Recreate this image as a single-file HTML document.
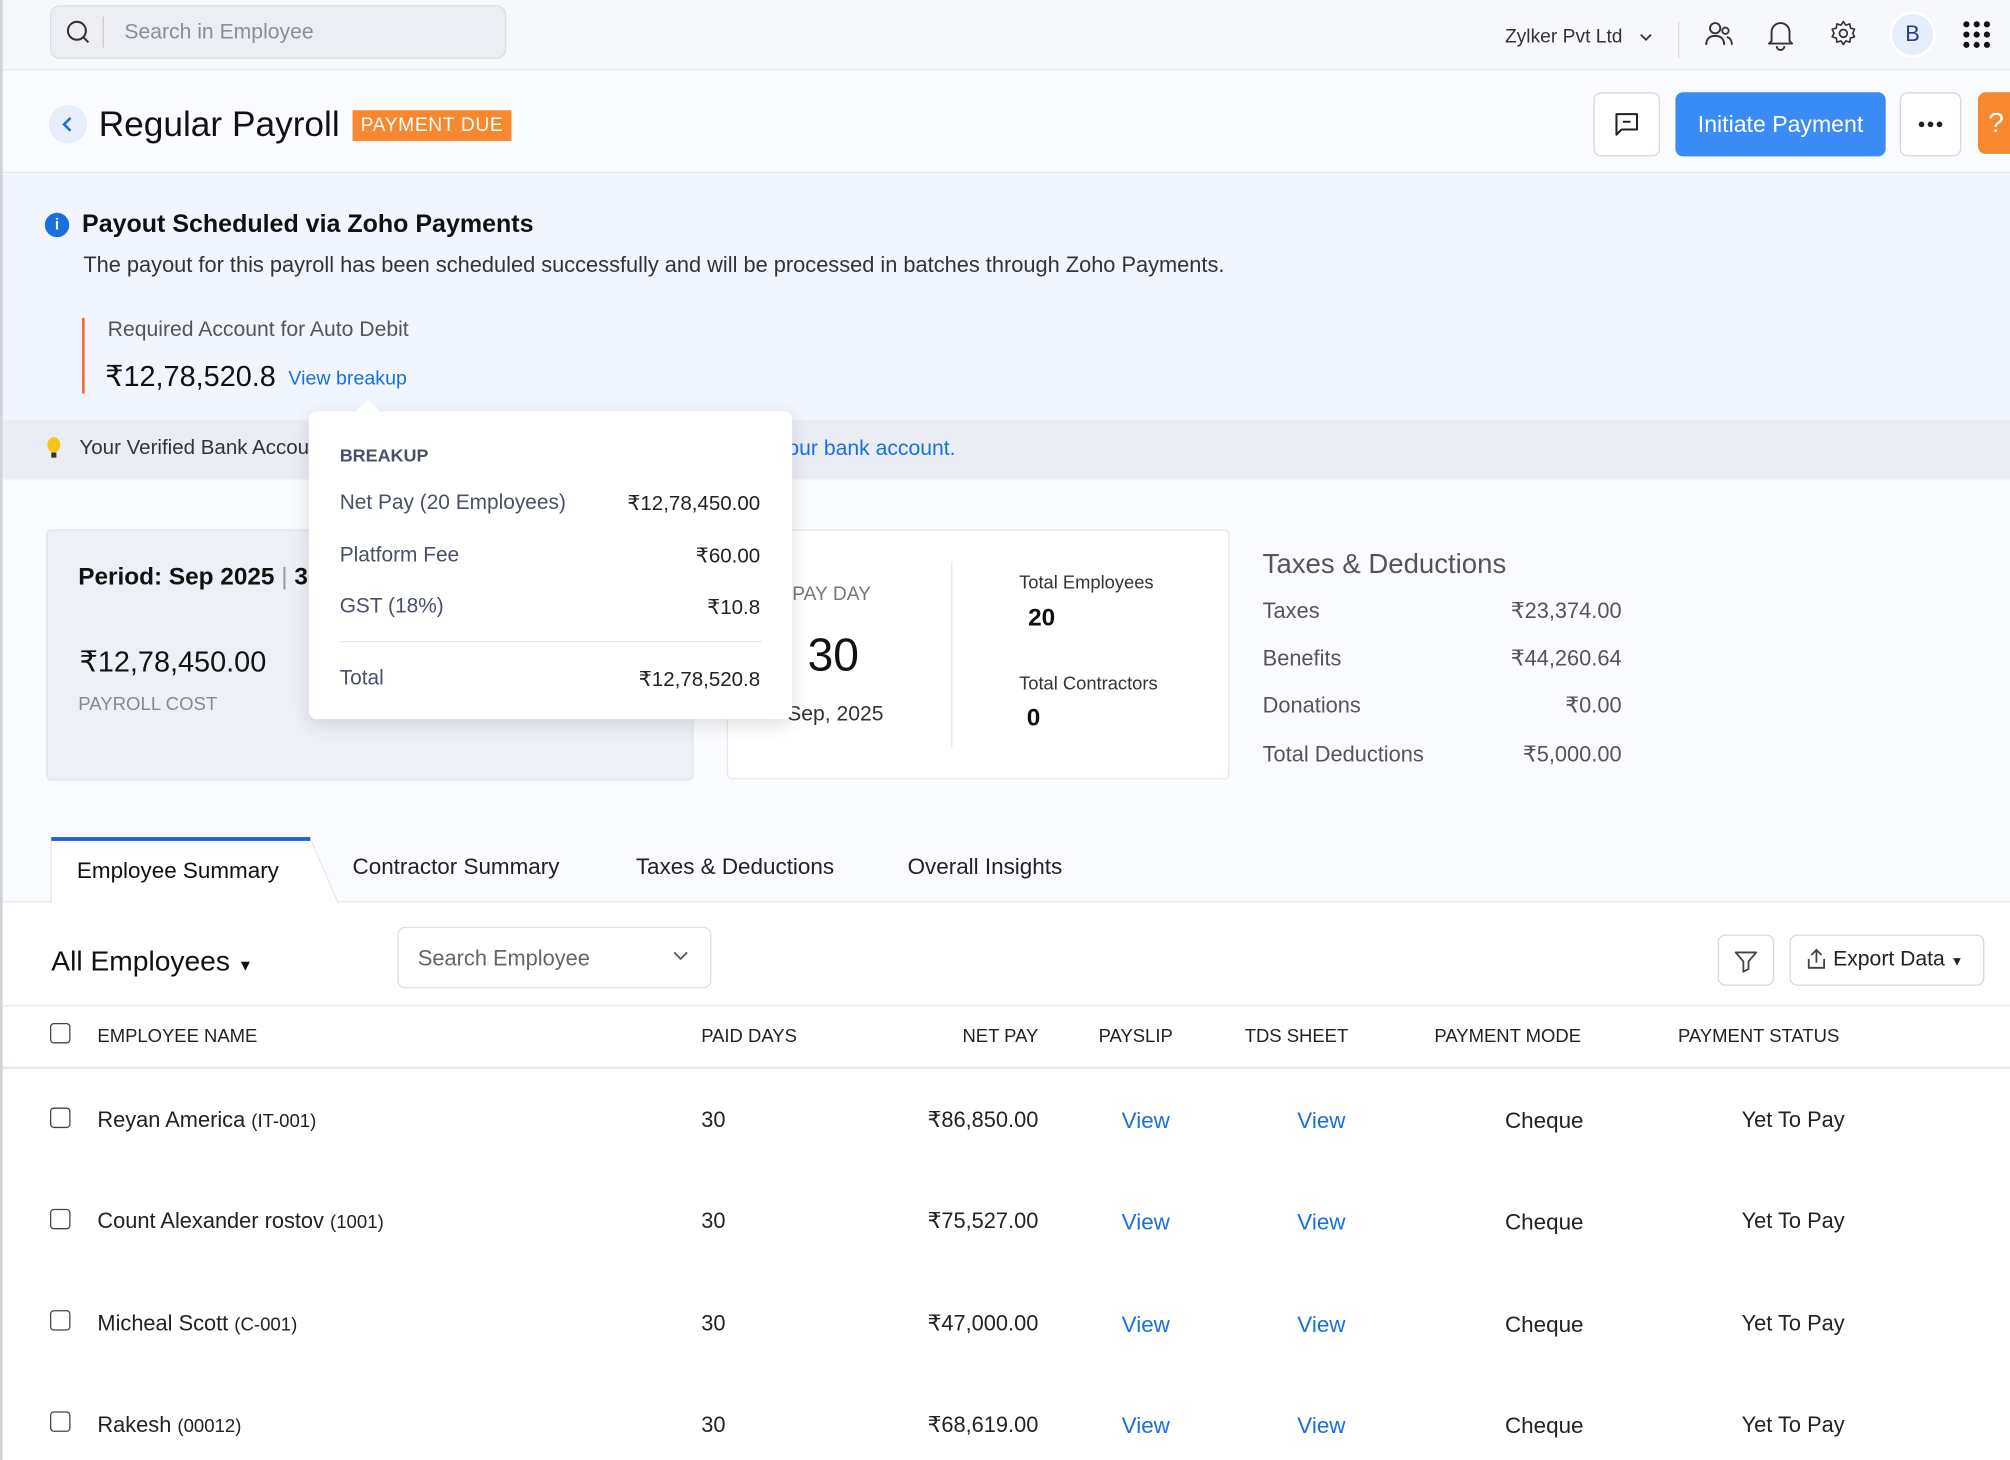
<!DOCTYPE html>
<html><head><meta charset="utf-8"><style>
*{box-sizing:border-box;margin:0;padding:0}
html,body{width:2010px;height:1460px;overflow:hidden;background:#fafbfe}
#w{position:absolute;left:0;top:0;width:1568px;height:1139px;transform:scale(1.28189);transform-origin:0 0;font-family:"Liberation Sans",sans-serif;color:#222;background:#fafbfe}
.a{position:absolute;white-space:nowrap}
.r{text-align:right}
.blue{color:#1a6fe0}
.g{color:#555}
svg{position:absolute}
.cb{position:absolute;width:16px;height:16px;border:1.5px solid #444;border-radius:3px;background:#fff}
.btn{position:absolute;border:1.5px solid #d6d8de;border-radius:6px;background:#fff}
.th{font-size:14.4px;color:#222;top:801px}
</style></head><body><div id="w">
<div class="a" style="left:0;top:0;width:2px;height:1139px;background:#cfd2da;z-index:5"></div>
<div class="a" style="left:0;top:0;width:1568px;height:55px;background:#f7f8fc;border-bottom:1px solid #e6e8ee"></div>
<div class="a" style="left:39px;top:4px;width:356px;height:42px;background:#eceef4;border:1px solid #dcdfe6;border-radius:8px"></div>
<svg style="left:51px;top:15px" width="20" height="20" viewBox="0 0 20 20"><circle cx="9" cy="9" r="7" fill="none" stroke="#333" stroke-width="1.6"/><path d="M14 14l4 4" stroke="#333" stroke-width="1.6"/></svg>
<div class="a" style="left:80px;top:13px;width:1px;height:24px;background:#ccc"></div>
<div class="a" style="left:97px;top:16px;font-size:16.5px;color:#8a8e99">Search in Employee</div>
<div class="a" style="left:1174px;top:20px;font-size:15px;color:#333">Zylker Pvt Ltd</div>
<svg style="left:1278px;top:24px" width="12" height="10" viewBox="0 0 12 10"><path d="M2 3l4 4 4-4" fill="none" stroke="#333" stroke-width="1.4"/></svg>
<div class="a" style="left:1309px;top:17px;width:1px;height:28px;background:#ddd"></div>
<svg style="left:1329px;top:16px" width="24" height="22" viewBox="0 0 24 22"><circle cx="9" cy="6" r="4" fill="none" stroke="#333" stroke-width="1.5"/><path d="M2 19c0-5 3-7 7-7s7 2 7 7" fill="none" stroke="#333" stroke-width="1.5"/><circle cx="17" cy="8" r="2.5" fill="none" stroke="#333" stroke-width="1.4"/><path d="M18 13c2 0 4 2 4 6" fill="none" stroke="#333" stroke-width="1.4"/></svg>
<svg style="left:1378px;top:14px" width="22" height="26" viewBox="0 0 22 26"><path d="M4 18V11a7 7 0 0114 0v7l2 2H2z" fill="none" stroke="#333" stroke-width="1.5" stroke-linejoin="round"/><path d="M8 22a3 3 0 006 0" fill="none" stroke="#333" stroke-width="1.5"/></svg>
<svg style="left:1427px;top:15px" width="22" height="22" viewBox="0 0 24 24"><circle cx="12" cy="12" r="3.3" fill="none" stroke="#333" stroke-width="1.5"/><path d="M12 2l2 3 3.5-1 .5 3.5 3.5 1-1.5 3.5 1.5 3-3.5 1-.5 3.5-3.5-1-2 3-2-3-3.5 1-.5-3.5-3.5-1 1.5-3-1.5-3.5 3.5-1L6.5 4 10 5z" fill="none" stroke="#333" stroke-width="1.4" stroke-linejoin="round"/></svg>
<div class="a" style="left:1474px;top:9px;width:36px;height:36px;border-radius:50%;background:#e6eefb;border:2px solid #fff;font-size:17px;color:#1d3f8a;text-align:center;line-height:32px">B</div>
<svg style="left:1531px;top:16px" width="22" height="22" viewBox="0 0 22 22" fill="#111"><circle cx="3" cy="3" r="2.4"/><circle cx="11" cy="3" r="2.4"/><circle cx="19" cy="3" r="2.4"/><circle cx="3" cy="11" r="2.4"/><circle cx="11" cy="11" r="2.4"/><circle cx="19" cy="11" r="2.4"/><circle cx="3" cy="19" r="2.4"/><circle cx="11" cy="19" r="2.4"/><circle cx="19" cy="19" r="2.4"/></svg>
<div class="a" style="left:0;top:56px;width:1568px;height:79px;background:#fafbfe;border-bottom:1px solid #e6e8ee"></div>
<div class="a" style="left:38px;top:82px;width:30px;height:30px;border-radius:50%;background:#e8effb"></div>
<svg style="left:46px;top:89px" width="14" height="16" viewBox="0 0 14 16"><path d="M9 3L4 8l5 5" fill="none" stroke="#1a6fe0" stroke-width="2"/></svg>
<div class="a" style="left:77px;top:81px;font-size:27.5px;color:#111">Regular Payroll</div>
<div class="a" style="left:275px;top:86px;width:124px;height:24px;background:#f7882f;color:#fff;font-size:15px;line-height:24px;text-align:center;letter-spacing:.5px">PAYMENT DUE</div>
<div class="btn" style="left:1243px;top:72px;width:52px;height:50px"></div>
<svg style="left:1258px;top:87px" width="22" height="20" viewBox="0 0 22 20"><path d="M3 2h16v12H7l-4 4z" fill="none" stroke="#222" stroke-width="1.6" stroke-linejoin="round"/><path d="M8 8h6" stroke="#222" stroke-width="1.6"/></svg>
<div class="a" style="left:1307px;top:72px;width:164px;height:50px;background:#3b8bf7;border-radius:6px;color:#fff;font-size:18px;line-height:50px;text-align:center">Initiate Payment</div>
<div class="btn" style="left:1482px;top:72px;width:48px;height:50px"></div>
<svg style="left:1496px;top:94px" width="20" height="6" viewBox="0 0 20 6" fill="#222"><circle cx="3" cy="3" r="2.2"/><circle cx="10" cy="3" r="2.2"/><circle cx="17" cy="3" r="2.2"/></svg>
<div class="a" style="left:1543px;top:72px;width:40px;height:48px;background:#f7882f;border-radius:6px;color:#fff;font-size:22px;line-height:48px;padding-left:8px">?</div>
<div class="a" style="left:0;top:136px;width:1568px;height:192px;background:#f1f5fd"></div>
<div class="a" style="left:35px;top:166px;width:19px;height:19px;border-radius:50%;background:#1a6fe0;color:#fff;font-size:12px;font-weight:bold;text-align:center;line-height:19px">i</div>
<div class="a" style="left:64px;top:164px;font-size:19.5px;font-weight:bold;color:#111">Payout Scheduled via Zoho Payments</div>
<div class="a" style="left:65px;top:197px;font-size:17px;color:#333">The payout for this payroll has been scheduled successfully and will be processed in batches through Zoho Payments.</div>
<div class="a" style="left:64px;top:248px;width:2px;height:59px;background:#f26b2a"></div>
<div class="a" style="left:84px;top:248px;font-size:16.5px;color:#555">Required Account for Auto Debit</div>
<div class="a" style="left:82px;top:281px;font-size:22.5px;color:#111">₹12,78,520.8</div>
<div class="a blue" style="left:225px;top:287px;font-size:15.3px">View breakup</div>
<div class="a" style="left:0;top:328px;width:1568px;height:46px;background:#ebedf5"></div>
<svg style="left:36px;top:341px" width="12" height="18" viewBox="0 0 12 18"><ellipse cx="6" cy="6" rx="5" ry="6" fill="#f5c518"/><rect x="4" y="12" width="4" height="4" fill="#333"/></svg>
<div class="a" style="left:62px;top:341px;font-size:16px;color:#333">Your Verified Bank Account will be debited automatically, please link </div>
<div class="a blue" style="left:602px;top:341px;font-size:16.5px;background:#ebedf5;padding-left:4px">your bank account.</div>
<div class="a" style="left:36px;top:413px;width:505px;height:196px;background:#eef0f7;border:1px solid #e1e4ec;border-radius:4px"></div>
<div class="a" style="left:61px;top:440px;font-size:19px;font-weight:bold;color:#111">Period: Sep 2025 <span style="font-weight:normal;color:#999">|</span> 30 Base Days</div>
<div class="a" style="left:62px;top:504px;font-size:22.5px;color:#111">₹12,78,450.00</div>
<div class="a" style="left:61px;top:542px;font-size:14.5px;color:#888">PAYROLL COST</div>
<div class="a" style="left:567px;top:413px;width:392px;height:195px;background:#fff;border:1px solid #e6e8ee;border-radius:4px"></div>
<div class="a" style="left:618px;top:455px;font-size:15px;color:#777">PAY DAY</div>
<div class="a" style="left:630px;top:490px;font-size:36px;color:#111">30</div>
<div class="a" style="left:614px;top:548px;font-size:16.5px;color:#333">Sep, 2025</div>
<div class="a" style="left:742px;top:438px;width:1px;height:145px;background:#e4e6ec"></div>
<div class="a" style="left:795px;top:447px;font-size:14.3px;color:#333">Total Employees</div>
<div class="a" style="left:802px;top:472px;font-size:19px;font-weight:bold;color:#111">20</div>
<div class="a" style="left:795px;top:526px;font-size:14.3px;color:#333">Total Contractors</div>
<div class="a" style="left:801px;top:550px;font-size:19px;font-weight:bold;color:#111">0</div>
<div class="a" style="left:985px;top:428px;font-size:21.5px;color:#555">Taxes &amp; Deductions</div>
<div class="a g" style="left:985px;top:467px;font-size:17px">Taxes</div><div class="a g r" style="left:1100px;width:165px;top:467px;font-size:17px">₹23,374.00</div>
<div class="a g" style="left:985px;top:504px;font-size:17px">Benefits</div><div class="a g r" style="left:1100px;width:165px;top:504px;font-size:17px">₹44,260.64</div>
<div class="a g" style="left:985px;top:541px;font-size:17px">Donations</div><div class="a g r" style="left:1100px;width:165px;top:541px;font-size:17px">₹0.00</div>
<div class="a g" style="left:985px;top:579px;font-size:17px">Total Deductions</div><div class="a g r" style="left:1100px;width:165px;top:579px;font-size:17px">₹5,000.00</div>
<div class="a" style="left:241px;top:321px;width:377px;height:240px;background:#fff;border-radius:6px;box-shadow:0 4px 14px rgba(0,0,0,.13);z-index:3">
<div class="a" style="left:40px;top:-7px;width:12px;height:12px;background:#fff;transform:rotate(45deg)"></div>
<div class="a" style="left:24px;top:26px;font-size:14px;font-weight:bold;color:#4a5068">BREAKUP</div>
<div class="a" style="left:24px;top:62px;font-size:16.3px;color:#4a5068">Net Pay (20 Employees)</div><div class="a r" style="left:150px;width:202px;top:62px;font-size:16px;color:#222">₹12,78,450.00</div>
<div class="a" style="left:24px;top:103px;font-size:16.3px;color:#4a5068">Platform Fee</div><div class="a r" style="left:150px;width:202px;top:103px;font-size:16px;color:#222">₹60.00</div>
<div class="a" style="left:24px;top:143px;font-size:16.3px;color:#4a5068">GST (18%)</div><div class="a r" style="left:150px;width:202px;top:143px;font-size:16px;color:#222">₹10.8</div>
<div class="a" style="left:24px;top:179px;width:329px;height:1px;background:#e3e6ee"></div>
<div class="a" style="left:24px;top:199px;font-size:16.3px;color:#4a5068">Total</div><div class="a r" style="left:150px;width:202px;top:199px;font-size:16px;color:#222">₹12,78,520.8</div>
</div>
<div class="a" style="left:0;top:703px;width:1568px;height:436px;background:#fff;border-top:1px solid #e6e8ee"></div>
<svg style="left:38px;top:652px" width="230" height="53" viewBox="0 0 230 53"><path d="M2 52V2h202l22 51" fill="#fff" stroke="#e6e8ee"/><rect x="2" y="1" width="202" height="3" fill="#1f5fd6"/></svg>
<div class="a" style="left:60px;top:669px;font-size:17.5px;color:#111">Employee Summary</div>
<div class="a" style="left:275px;top:666px;font-size:17.5px;color:#222">Contractor Summary</div>
<div class="a" style="left:496px;top:666px;font-size:17.5px;color:#222">Taxes &amp; Deductions</div>
<div class="a" style="left:708px;top:666px;font-size:17.5px;color:#222">Overall Insights</div>
<div class="a" style="left:40px;top:737px;font-size:22px;color:#111">All Employees <span style="font-size:12px">▼</span></div>
<div class="btn" style="left:310px;top:723px;width:245px;height:48px;border-color:#dfe1e6"></div>
<div class="a" style="left:326px;top:738px;font-size:17px;color:#666">Search Employee</div>
<svg style="left:524px;top:741px" width="14" height="10" viewBox="0 0 14 10"><path d="M2 2l5 5 5-5" fill="none" stroke="#555" stroke-width="1.4"/></svg>
<div class="btn" style="left:1340px;top:729px;width:44px;height:40px"></div>
<svg style="left:1352px;top:740px" width="20" height="20" viewBox="0 0 20 20"><path d="M2 3h16l-6 7v6l-4 2v-8z" fill="none" stroke="#444" stroke-width="1.4" stroke-linejoin="round"/></svg>
<div class="btn" style="left:1396px;top:729px;width:152px;height:40px"></div>
<svg style="left:1408px;top:739px" width="18" height="18" viewBox="0 0 18 18"><path d="M9 12V2M5 6l4-4 4 4M3 9v7h12V9" fill="none" stroke="#444" stroke-width="1.4"/></svg>
<div class="a" style="left:1430px;top:739px;font-size:16.5px;color:#222">Export Data <span style="font-size:10px">▼</span></div>
<div class="a" style="left:0;top:784px;width:1568px;height:50px;border-top:1px solid #e6e8ee;border-bottom:2px solid #e6e8ee"></div>
<div class="cb" style="left:39px;top:798px"></div>
<div class="a th" style="left:76px">EMPLOYEE NAME</div>
<div class="a th" style="left:547px">PAID DAYS</div>
<div class="a th r" style="left:700px;width:110px">NET PAY</div>
<div class="a th" style="left:857px">PAYSLIP</div>
<div class="a th" style="left:971px">TDS SHEET</div>
<div class="a th" style="left:1119px">PAYMENT MODE</div>
<div class="a th" style="left:1309px">PAYMENT STATUS</div>

<div class="cb" style="left:39px;top:864px"></div>
<div class="a" style="left:76px;top:864px;font-size:17px">Reyan America <span style="font-size:14.5px">(IT-001)</span></div>
<div class="a" style="left:547px;top:864px;font-size:17px">30</div>
<div class="a r" style="left:650px;width:160px;top:864px;font-size:17px">₹86,850.00</div>
<div class="a blue" style="left:875px;top:864px;font-size:17.5px">View</div>
<div class="a blue" style="left:1012px;top:864px;font-size:17.5px">View</div>
<div class="a" style="left:1174px;top:864px;font-size:17.5px">Cheque</div>
<div class="a r" style="left:1300px;width:139px;top:864px;font-size:17px">Yet To Pay</div>

<div class="cb" style="left:39px;top:943px"></div>
<div class="a" style="left:76px;top:943px;font-size:17px">Count Alexander rostov <span style="font-size:14.5px">(1001)</span></div>
<div class="a" style="left:547px;top:943px;font-size:17px">30</div>
<div class="a r" style="left:650px;width:160px;top:943px;font-size:17px">₹75,527.00</div>
<div class="a blue" style="left:875px;top:943px;font-size:17.5px">View</div>
<div class="a blue" style="left:1012px;top:943px;font-size:17.5px">View</div>
<div class="a" style="left:1174px;top:943px;font-size:17.5px">Cheque</div>
<div class="a r" style="left:1300px;width:139px;top:943px;font-size:17px">Yet To Pay</div>

<div class="cb" style="left:39px;top:1022px"></div>
<div class="a" style="left:76px;top:1023px;font-size:17px">Micheal Scott <span style="font-size:14.5px">(C-001)</span></div>
<div class="a" style="left:547px;top:1023px;font-size:17px">30</div>
<div class="a r" style="left:650px;width:160px;top:1023px;font-size:17px">₹47,000.00</div>
<div class="a blue" style="left:875px;top:1023px;font-size:17.5px">View</div>
<div class="a blue" style="left:1012px;top:1023px;font-size:17.5px">View</div>
<div class="a" style="left:1174px;top:1023px;font-size:17.5px">Cheque</div>
<div class="a r" style="left:1300px;width:139px;top:1023px;font-size:17px">Yet To Pay</div>

<div class="cb" style="left:39px;top:1101px"></div>
<div class="a" style="left:76px;top:1102px;font-size:17px">Rakesh <span style="font-size:14.5px">(00012)</span></div>
<div class="a" style="left:547px;top:1102px;font-size:17px">30</div>
<div class="a r" style="left:650px;width:160px;top:1102px;font-size:17px">₹68,619.00</div>
<div class="a blue" style="left:875px;top:1102px;font-size:17.5px">View</div>
<div class="a blue" style="left:1012px;top:1102px;font-size:17.5px">View</div>
<div class="a" style="left:1174px;top:1102px;font-size:17.5px">Cheque</div>
<div class="a r" style="left:1300px;width:139px;top:1102px;font-size:17px">Yet To Pay</div>
</div></body></html>
